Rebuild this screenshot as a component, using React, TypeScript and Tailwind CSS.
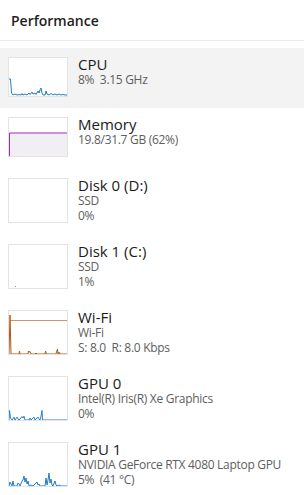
import React from 'react';

type Item = {
  title: string;
  lines: string[];
  graph: React.ReactNode;
  active?: boolean;
};

const font = { fontFamily: '"Open Sans", "Noto Sans", sans-serif' };

function CpuGraph() {
  return (
    <svg viewBox="0 0 58 38" className="w-full h-full" preserveAspectRatio="none">
      <polyline
        fill="none"
        stroke="#1f7ec4"
        strokeWidth="1"
        points="0,21 1.5,21 2.5,35 4,37 6,36 8,37 10,36.5 12,37 13,35.5 14,37 16,36 18,37 20,35 21,36.5 23,34 24,36 26,35 27,36.5 29,33 30,35 31,32 32,30 33,35 34,37 36,37 37,33 38,36 40,37 42,35.5 44,37 46,36 48,37 50,36 52,37 54,36.5 56,37 58,37"
      />
    </svg>
  );
}

function MemoryGraph() {
  return (
    <svg viewBox="0 0 58 38" className="w-full h-full" preserveAspectRatio="none">
      <rect x="0" y="15" width="58" height="23" fill="#f1eef4" />
      <polyline fill="none" stroke="#9a30ae" strokeWidth="1" points="0.5,38 0.5,15 58,15" />
    </svg>
  );
}

function Disk1Graph() {
  return (
    <svg viewBox="0 0 58 43" className="w-full h-full" preserveAspectRatio="none">
      <rect x="6" y="41" width="1" height="1" fill="#6cc04a" />
    </svg>
  );
}

function WifiGraph() {
  return (
    <svg viewBox="0 0 58 43" className="w-full h-full" preserveAspectRatio="none">
      <line x1="1" y1="9.5" x2="58" y2="9.5" stroke="#c9976a" strokeWidth="1" />
      <polyline
        fill="none"
        stroke="#b05a12"
        strokeWidth="1"
        points="0,43 1,4 2,43 10,43 10.5,40 11,43 19,43 19.5,40 20,41 21,40.5 22,43 26,43 27,42 28,43 36,43 36.5,40 37.5,43 47,43 47.5,41 48.5,38 49,43 50,41 51,43 58,43"
      />
    </svg>
  );
}

function Gpu0Graph() {
  return (
    <svg viewBox="0 0 58 45" className="w-full h-full" preserveAspectRatio="none">
      <polyline
        fill="none"
        stroke="#1f7ec4"
        strokeWidth="1"
        points="0,45 0.5,35 1.5,43 3,45 5,42 6,45 8,42 9,44 10,45 13,41.5 14,43 15,41 16,45 20,45 21,43 22,45 25,42 26,45 29,42 30,44 31,45 32,41 33,35 33.5,45 58,45"
      />
    </svg>
  );
}

function Gpu1Graph() {
  return (
    <svg viewBox="0 0 58 43" className="w-full h-full" preserveAspectRatio="none">
      <polyline
        fill="none"
        stroke="#1f7ec4"
        strokeWidth="1"
        points="0,43 1,39 2,41 3,43 4,38 5,43 8,43 9,40 10,41 11,43 13,38 14,37 15,33 16,39 17,35 18,41 19,38 20,43 22,42 24,43 26,41 28,39 29,42 30,41 31,43 36,43 37,35 38,42 39,37 40,30 41,40 42,36 43,42 44,43 46,38 47,42 48,43 50,42 52,43 58,43"
      />
    </svg>
  );
}

const items: Item[] = [
  { title: 'CPU', lines: ['8%  3.15 GHz'], graph: <CpuGraph />, active: true },
  { title: 'Memory', lines: ['19.8/31.7 GB (62%)'], graph: <MemoryGraph /> },
  { title: 'Disk 0 (D:)', lines: ['SSD', '0%'], graph: null },
  { title: 'Disk 1 (C:)', lines: ['SSD', '1%'], graph: <Disk1Graph /> },
  { title: 'Wi-Fi', lines: ['Wi-Fi', 'S: 8.0  R: 8.0 Kbps'], graph: <WifiGraph /> },
  { title: 'GPU 0', lines: ['Intel(R) Iris(R) Xe Graphics', '0%'], graph: <Gpu0Graph /> },
  { title: 'GPU 1', lines: ['NVIDIA GeForce RTX 4080 Laptop GPU', '5%  (41 °C)'], graph: <Gpu1Graph /> },
];

function Row({ item }: { item: Item }) {
  const tall = item.lines.length > 1;
  return (
    <div
      className={`flex items-start gap-[10px] pl-2 ${tall ? 'h-[66px] pt-[10px]' : 'h-[60px] pt-[9px]'} ${
        item.active ? 'bg-[#f3f3f3]' : 'bg-white'
      }`}
    >
      <div
        className={`w-[60px] shrink-0 border border-[#e3e3e3] bg-white overflow-hidden ${
          tall ? 'h-[45px]' : 'h-[40px]'
        }`}
      >
        {item.graph}
      </div>
      <div className="flex flex-col -mt-[2px] min-w-0">
        <div className="text-[15px] leading-[18px] text-[#1b1b1b] whitespace-nowrap">{item.title}</div>
        {item.lines.map((l, i) => (
          <div key={i} className="text-[12px] leading-[14.5px] tracking-[-0.3px] text-[#5e5e5e] whitespace-pre">
            {l}
          </div>
        ))}
      </div>
    </div>
  );
}

export default function App() {
  return (
    <div className="w-[304px] h-[495px] bg-white overflow-hidden" style={font}>
      <div className="h-[41px] border-b border-[#e8ebf0] pl-[11px] pt-[8px]">
        <span className="text-[14px] font-semibold text-[#1f1f1f]">Performance</span>
      </div>
      <div className="pt-[7px]">
        {items.map((it) => (
          <Row key={it.title} item={it} />
        ))}
      </div>
    </div>
  );
}
